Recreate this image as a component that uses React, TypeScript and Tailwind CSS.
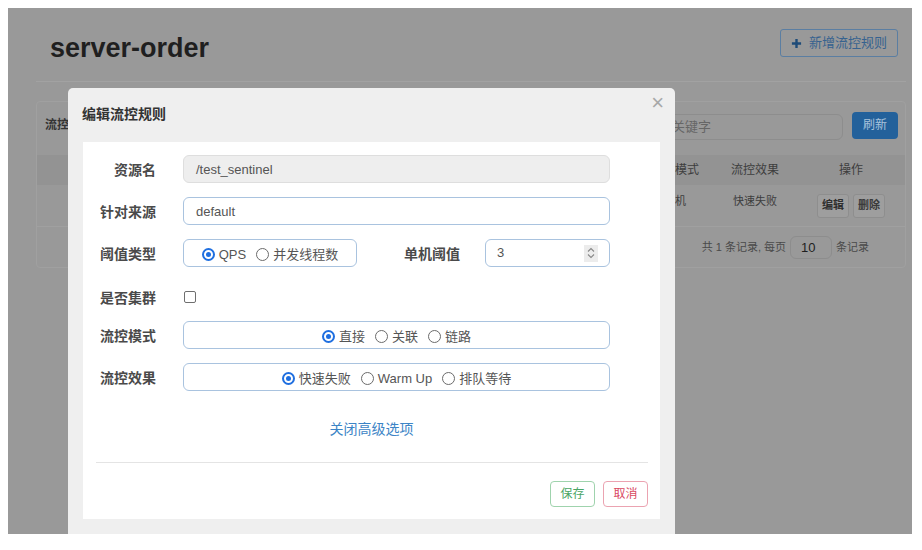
import React from "react";

const FONT = { fontFamily: '"Liberation Sans","Noto Sans CJK SC",sans-serif' };

function Radio({ checked, label }: { checked?: boolean; label: string }) {
  return (
    <span className="flex items-center gap-[4px]">
      {checked ? (
        <span className="w-[13px] h-[13px] rounded-full border-[2px] border-[#1f6fe0] flex items-center justify-center bg-white">
          <span className="w-[5px] h-[5px] rounded-full bg-[#1f6fe0]" />
        </span>
      ) : (
        <span className="w-[13px] h-[13px] rounded-full border border-[#6b6b6b] bg-white" />
      )}
      <span className="text-[13px] text-[#555]">{label}</span>
    </span>
  );
}

function Label({ children }: { children: React.ReactNode }) {
  return <div className="w-[73px] shrink-0 pt-[3px] text-right text-[14px] font-bold text-[#4a4a4a]">{children}</div>;
}

function BackgroundPage() {
  return (
    <div className="pl-[28px] pr-[6px]">
      {/* header */}
      <div className="h-[74px] pl-[14px] pr-[8px] flex justify-between border-b border-[#a2a2a2]">
        <h1 className="mt-[27px] text-[27px] font-bold leading-none text-[#1f1f1f]">server-order</h1>
        <button className="mt-[21px] h-[28px] px-[10px] flex items-center gap-[7px] border border-[#5b7ea2] rounded-[3px] text-[13px] text-[#36628f]">
          <svg width="11" height="11" viewBox="0 0 12 12"><path d="M6 1v10M1 6h10" stroke="#1e4b78" strokeWidth="2.6" /></svg>
          新增流控规则
        </button>
      </div>

      {/* panel */}
      <div className="mt-[19px] h-[167px] border border-[#a0a0a0] rounded-[4px]">
        <div className="h-[46px] flex items-center pl-[8px] pr-[7px]">
          <span className="text-[12px] font-bold text-[#333]">流控规则</span>
          <div className="ml-auto w-[221px] h-[26px] mt-[3px] border border-[#8d8d8d] rounded-[6px] flex items-center pl-[10px] text-[13px] text-[#666]">
            请输入关键字
          </div>
          <button className="ml-[9px] w-[46px] h-[27px] rounded-[4px] bg-[#23619b] text-[12px] text-[#aac3dc]">刷新</button>
        </div>
        <div className="mt-[7px] h-[30px] bg-[#939393] flex items-center text-[12px] text-[#3d3d3d]">
          <span className="flex-1" />
          <span className="w-[76px] text-center">阈值模式</span>
          <span className="w-[84px] text-center">流控效果</span>
          <span className="w-[108px] text-center">操作</span>
        </div>
        <div className="h-[42px] flex items-center text-[11px] text-[#3d3d3d] border-b border-[#a0a0a0]">
          <span className="flex-1" />
          <span className="w-[76px] text-center -mt-[8px]">单机</span>
          <span className="w-[84px] text-center -mt-[8px]">快速失败</span>
          <span className="w-[108px] flex justify-center gap-[4px]">
            <span className="px-[4px] h-[24px] flex items-center border border-[#8e8e8e] rounded-[3px] bg-[#9e9e9e] font-bold text-[#2e2e2e]">编辑</span>
            <span className="px-[4px] h-[24px] flex items-center border border-[#8e8e8e] rounded-[3px] bg-[#9e9e9e] font-bold text-[#3a3a3a]">删除</span>
          </span>
        </div>
        <div className="h-[41px] flex items-center justify-end pr-[36px] text-[11px] text-[#4a4a4a]">
          <span>共 1 条记录, 每页</span>
          <span className="mx-[4px] w-[42px] h-[23px] border border-[#8d8d8d] rounded-[6px] flex items-center pl-[10px] text-[13px] text-[#1e1e1e]">10</span>
          <span>条记录</span>
        </div>
      </div>
    </div>
  );
}

function Modal() {
  return (
    <div className="absolute left-[60px] top-[80px] w-[607px] h-[470px] bg-[#efefef] rounded-t-[5px]">
      <div className="h-[54px] flex justify-between pl-[14px] pr-[11px]">
        <span className="mt-[16px] text-[14px] font-bold text-[#333]">编辑流控规则</span>
        <span className="mt-[4px] text-[22px] leading-none text-[#a8a8a8]">×</span>
      </div>
      <div className="mx-[15px] h-[377px] bg-white pt-[13px]">
        <div className="flex items-center">
          <Label>资源名</Label>
          <div className="ml-[27px] w-[427px] h-[28px] rounded-[6px] bg-[#eeeeee] border border-[#dedede] flex items-center pl-[12px] pt-[1px] text-[13px] text-[#555]">
            /test_sentinel
          </div>
        </div>
        <div className="mt-[14px] flex items-center">
          <Label>针对来源</Label>
          <div className="ml-[27px] w-[427px] h-[28px] rounded-[6px] border border-[#a9c3df] flex items-center pl-[12px] pt-[1px] text-[13px] text-[#555]">
            default
          </div>
        </div>
        <div className="mt-[14px] flex items-center">
          <Label>阈值类型</Label>
          <div className="ml-[27px] w-[174px] h-[28px] pt-[3px] rounded-[6px] border border-[#a9c3df] flex items-center justify-center gap-[10px]">
            <Radio checked label="QPS" />
            <Radio label="并发线程数" />
          </div>
          <div className="w-[103px] pt-[3px] text-right text-[14px] font-bold text-[#4a4a4a]">单机阈值</div>
          <div className="ml-[25px] w-[125px] h-[28px] rounded-[6px] border border-[#a9c3df] flex items-center pl-[11px] pr-[11px] text-[13px] text-[#555]">
            <span>3</span>
            <span className="ml-auto w-[14px] h-[17px] bg-[#ececec] flex items-center justify-center">
              <svg width="8" height="12" viewBox="0 0 8 12" fill="none" stroke="#888" strokeWidth="1.1">
                <path d="M1 4.5L4 1.5L7 4.5" />
                <path d="M1 7.5L4 10.5L7 7.5" />
              </svg>
            </span>
          </div>
        </div>
        <div className="mt-[16px] h-[28px] flex items-center">
          <Label>是否集群</Label>
          <span className="ml-[28px] w-[12px] h-[12px] border border-[#6f6f6f] rounded-[2px]" />
        </div>
        <div className="mt-[10px] flex items-center">
          <Label>流控模式</Label>
          <div className="ml-[27px] w-[427px] h-[28px] pt-[3px] rounded-[6px] border border-[#a9c3df] flex items-center justify-center gap-[10px]">
            <Radio checked label="直接" />
            <Radio label="关联" />
            <Radio label="链路" />
          </div>
        </div>
        <div className="mt-[14px] flex items-center">
          <Label>流控效果</Label>
          <div className="ml-[27px] w-[427px] h-[28px] pt-[3px] rounded-[6px] border border-[#a9c3df] flex items-center justify-center gap-[10px]">
            <Radio checked label="快速失败" />
            <Radio label="Warm Up" />
            <Radio label="排队等待" />
          </div>
        </div>
        <div className="mt-[28px] h-[20px] text-center text-[14px] leading-[20px] text-[#3c84c6]">关闭高级选项</div>
        <div className="mt-[23px] mx-[13px] mr-[12px] border-t border-[#e4e4e4]" />
        <div className="mt-[18px] flex justify-end gap-[8px] pr-[12px]">
          <button className="w-[45px] h-[26px] rounded-[4px] border border-[#9fd3ad] text-[12px] text-[#4aa564] bg-white">保存</button>
          <button className="w-[45px] h-[26px] rounded-[4px] border border-[#eba3b1] text-[12px] text-[#d9485f] bg-white">取消</button>
        </div>
      </div>
    </div>
  );
}

export default function App() {
  return (
    <div className="w-[922px] h-[550px] bg-white pt-[8px] pl-[8px]" style={FONT}>
      <div className="relative w-[904px] h-[526px] bg-[#999999] overflow-hidden">
        <BackgroundPage />
        <Modal />
      </div>
    </div>
  );
}
